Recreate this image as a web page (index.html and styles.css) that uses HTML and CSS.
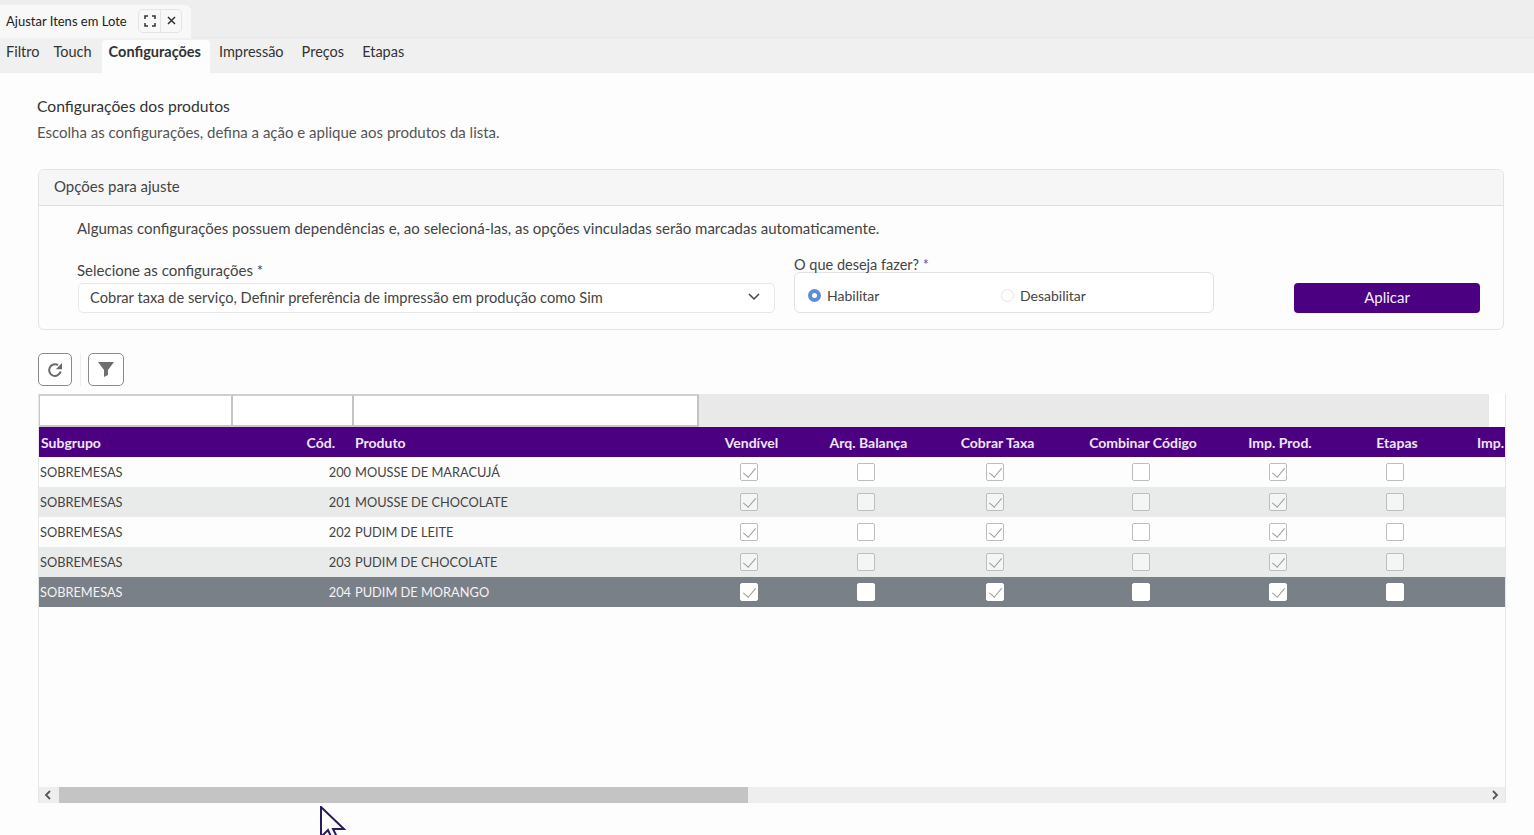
FILE: index.html

```html
<!DOCTYPE html>
<html lang="pt-BR">
<head>
  <meta charset="UTF-8" />
  <meta name="viewport" content="width=device-width, initial-scale=1.0" />
  <title>Ajustar Itens em Lote</title>
  <link rel="stylesheet" href="styles.css">
</head>
<body>

  <div class="window-bar">
    <div class="window-tab">
      <span class="window-title">Ajustar Itens em Lote</span>
      <div class="window-actions">
        <button class="window-btn" aria-label="Expandir">
          <svg width="12" height="12" viewBox="0 0 12 12" fill="none" stroke="#333" stroke-width="1.5"><path d="M1 4V1h3M8 1h3v3M11 8v3H8M4 11H1V8"/></svg>
        </button>
        <button class="window-btn" aria-label="Fechar">
          <svg width="9" height="9" viewBox="0 0 9 9" fill="none" stroke="#333" stroke-width="1.5"><path d="M1 1l7 7M8 1L1 8"/></svg>
        </button>
      </div>
    </div>
  </div>

  <nav class="tabs">
    <a class="tab tab-first">Filtro</a>
    <a class="tab">Touch</a>
    <a class="tab active">Configurações</a>
    <a class="tab">Impressão</a>
    <a class="tab">Preços</a>
    <a class="tab">Etapas</a>
  </nav>

  <main class="content">
    <h1 class="page-title">Configurações dos produtos</h1>
    <p class="page-desc">Escolha as configurações, defina a ação e aplique aos produtos da lista.</p>

    <section class="panel">
      <div class="panel-head">Opções para ajuste</div>
      <div class="panel-body">
        <p class="panel-note">Algumas configurações possuem dependências e, ao selecioná-las, as opções vinculadas serão marcadas automaticamente.</p>
        <div class="form-row">
          <div class="field field-select">
            <label>Selecione as configurações *</label>
            <div class="select">
              <span>Cobrar taxa de serviço, Definir preferência de impressão em produção como Sim</span>
              <svg width="12" height="8" viewBox="0 0 12 8" fill="none" stroke="#444" stroke-width="1.5"><path d="M1 1l5 5 5-5"/></svg>
            </div>
          </div>
          <div class="field field-radio">
            <label>O que deseja fazer? <span class="req">*</span></label>
            <div class="radio-box">
              <span class="radio-item"><i class="radio on"></i>Habilitar</span>
              <span class="radio-item"><i class="radio"></i>Desabilitar</span>
            </div>
          </div>
          <button class="btn-apply">Aplicar</button>
        </div>
      </div>
    </section>

    <div class="toolbar">
      <button class="tool-btn" aria-label="Atualizar">
        <svg width="16" height="16" viewBox="0 0 16 16" fill="none" stroke="#6a6a6a" stroke-width="2"><path d="M13.6 9.5A5.8 5.8 0 1 1 11 3.2"/><path d="M15 1v6.2H8.8z" fill="#6a6a6a" stroke="none"/></svg>
      </button>
      <span class="tool-sep"></span>
      <button class="tool-btn tool-btn-wide" aria-label="Filtrar">
        <svg width="16" height="15" viewBox="0 0 16 15" fill="#6f6f6f"><path d="M0 0h16L10 8v5l-4 2V8z"/></svg>
      </button>
    </div>

    <div class="grid">
      <div class="filter-row">
        <div class="filter-cell cell-sub"></div>
        <div class="filter-cell cell-cod"></div>
        <div class="filter-cell cell-prod"></div>
        <div class="filter-rest"></div>
      </div>
      <div class="grid-view">
        <table class="grid-table">
          <colgroup>
            <col class="col-sub"><col class="col-cod"><col class="col-prod">
            <col class="col-a"><col class="col-b"><col class="col-c"><col class="col-d"><col class="col-e"><col class="col-f"><col class="col-g">
          </colgroup>
          <thead>
            <tr>
              <th class="left">Subgrupo</th><th class="th-cod">Cód.</th><th class="left">Produto</th>
              <th>Vendível</th><th>Arq. Balança</th><th>Cobrar Taxa</th><th>Combinar Código</th><th>Imp. Prod.</th><th>Etapas</th><th class="th-imp">Imp.</th>
            </tr>
          </thead>
          <tbody>
            <tr>
              <td>SOBREMESAS</td><td class="num">200</td><td>MOUSSE DE MARACUJÁ</td>
              <td><i class="check on"></i></td><td><i class="check"></i></td><td><i class="check on"></i></td><td><i class="check"></i></td><td><i class="check on"></i></td><td><i class="check"></i></td><td></td>
            </tr>
            <tr>
              <td>SOBREMESAS</td><td class="num">201</td><td>MOUSSE DE CHOCOLATE</td>
              <td><i class="check on"></i></td><td><i class="check"></i></td><td><i class="check on"></i></td><td><i class="check"></i></td><td><i class="check on"></i></td><td><i class="check"></i></td><td></td>
            </tr>
            <tr>
              <td>SOBREMESAS</td><td class="num">202</td><td>PUDIM DE LEITE</td>
              <td><i class="check on"></i></td><td><i class="check"></i></td><td><i class="check on"></i></td><td><i class="check"></i></td><td><i class="check on"></i></td><td><i class="check"></i></td><td></td>
            </tr>
            <tr>
              <td>SOBREMESAS</td><td class="num">203</td><td>PUDIM DE CHOCOLATE</td>
              <td><i class="check on"></i></td><td><i class="check"></i></td><td><i class="check on"></i></td><td><i class="check"></i></td><td><i class="check on"></i></td><td><i class="check"></i></td><td></td>
            </tr>
            <tr class="selected">
              <td>SOBREMESAS</td><td class="num">204</td><td>PUDIM DE MORANGO</td>
              <td><i class="check on"></i></td><td><i class="check"></i></td><td><i class="check on"></i></td><td><i class="check"></i></td><td><i class="check on"></i></td><td><i class="check"></i></td><td></td>
            </tr>
          </tbody>
        </table>
      </div>
      <div class="scrollbar">
        <span class="scroll-arrow scroll-arrow-start">
          <svg width="7" height="10" viewBox="0 0 7 10" fill="none" stroke="#555" stroke-width="1.8"><path d="M6 1L2 5l4 4"/></svg>
        </span>
        <span class="scroll-thumb"></span>
        <span class="scroll-arrow scroll-arrow-end">
          <svg width="7" height="10" viewBox="0 0 7 10" fill="none" stroke="#555" stroke-width="1.8"><path d="M1 1l4 4-4 4"/></svg>
        </span>
      </div>
    </div>
  </main>

  <svg class="cursor" width="28" height="36" viewBox="0 0 28 36" fill="#fff" stroke="#2b1a5e" stroke-width="2"><path d="M1 1v30l7-7 5 11 5-2-5-10h11z"/></svg>

</body>
</html>
```

FILE: styles.css

```css
* { box-sizing: border-box; }
html, body { height: 100%; }
body { margin: 0; height: 835px; overflow: hidden; position: relative; background: #fdfdfd; color: #444; font-family: Lato, "Open Sans", Arial, sans-serif; font-size: 15px; }
button { font-family: inherit; padding: 0; cursor: pointer; }

.window-bar { height: 38px; padding-top: 5px; background: #eeeeee; border-bottom: 1px solid #e8e8e8; }
.window-tab { width: 191px; height: 33px; padding: 0 9px 2px 6px; display: flex; align-items: center; justify-content: space-between; background: #f8f8f8; border-radius: 0 6px 0 0; }
.window-title { color: #222; font-size: 13px; }
.window-actions { display: flex; border: 1px solid #e4e4e4; border-radius: 5px; }
.window-btn { width: 21px; height: 22px; display: flex; align-items: center; justify-content: center; background: none; border: 0; }
.window-btn + .window-btn { border-left: 1px solid #e4e4e4; }

.tabs { height: 35px; display: flex; align-items: flex-end; background: #f0f0f0; font-size: 14.5px; }
.tab { height: 33px; padding: 0 9px; line-height: 23px; color: #333; }
.tab-first { padding: 0 5px 0 6px; }
.tab.active { margin-left: 1px; padding: 0 9px 0 7px; background: #fdfdfd; border-radius: 4px 4px 0 0; font-weight: 700; color: #333; }

.content { padding: 23px 30px 0 38px; }
.page-title { margin: 0 0 0 -1px; font-size: 15.7px; font-weight: 400; line-height: 20px; color: #333; }
.page-desc { margin: 6px 0 0 -1px; line-height: 20px; color: #555; }

.panel { margin-top: 27px; border: 1px solid #e4e4e4; border-radius: 6px; background: #fdfdfd; }
.panel-head { height: 36px; padding-left: 15px; line-height: 33px; background: #f6f6f6; border-bottom: 1px solid #dedede; border-radius: 6px 6px 0 0; color: #444; }
.panel-body { height: 123px; padding: 12px 23px 16px 39px; }
.panel-note { margin: 0 0 0 -1px; line-height: 20px; color: #444; }
.form-row { margin-top: 20px; display: flex; align-items: flex-end; }
.field label { display: block; color: #444; }
.req { color: #7a3f9a; }
.field-select { width: 697px; }
.field-select label { margin: 0 0 4px -1px; line-height: 18px; }
.select { height: 30px; padding: 0 14px 2px 11px; display: flex; align-items: center; justify-content: space-between; background: #fff; border: 1px solid #e8e8e8; border-radius: 5px; color: #444; font-size: 14.65px; }
.field-radio { width: 420px; margin-left: 19px; }
.field-radio label { font-size: 14.5px; line-height: 14px; }
.radio-box { height: 41px; padding-left: 13px; display: flex; align-items: center; background: #fff; border: 1px solid #e2e2e2; border-radius: 6px; font-size: 14px; }
.radio-item { width: 193px; display: flex; align-items: center; gap: 6px; color: #444; padding-top: 6px; }
.radio { width: 13px; height: 13px; border-radius: 50%; border: 1px solid #e4e4e4; background: #fff; }
.radio.on { border: 4px solid #5b8dd9; }
.btn-apply { width: 186px; height: 30px; margin-left: 80px; padding-bottom: 2px; background: #4b0082; border: 0; border-radius: 4px; color: #f4f0f8; font-size: 15px; }

.toolbar { margin-top: 23px; display: flex; align-items: center; height: 33px; }
.tool-btn { width: 34px; height: 33px; display: flex; align-items: center; justify-content: center; background: #fff; border: 1px solid #8a8a8a; border-radius: 5px; }
.tool-btn-wide { width: 36px; }
.tool-sep { width: 1px; height: 33px; margin: 0 7px 0 8px; background: #eeeeee; }

.grid { margin-top: 8px; width: 1468px; border-right: 1px solid #e6e6e6; border-left: 1px solid #e6e6e6; }
.filter-row { height: 33px; display: flex; background: #fff; }
.filter-cell { height: 33px; background: #fff; border-top: 2px solid #cfcfcf; border-bottom: 2px solid #c8c8c8; border-right: 2px solid #c4c4c4; }
.filter-rest { width: 790px; background: #e9e9e9; }
.cell-sub { width: 194px; border-left: 1px solid #c8c8c8; }
.cell-cod { width: 121px; }
.cell-prod { width: 345px; }

.grid-view { height: 360px; overflow: hidden; }
.grid-table { width: 1540px; table-layout: fixed; border-collapse: collapse; }
col.col-sub { width: 193px; }
col.col-cod { width: 121px; }
col.col-prod { width: 345px; }
col.col-a { width: 107px; }
col.col-b { width: 127px; }
col.col-c { width: 131px; }
col.col-d { width: 160px; }
col.col-e { width: 114px; }
col.col-f { width: 120px; }
col.col-g { width: 122px; }
.grid-table th { height: 30px; padding: 0; background: #4b0082; color: #ece6f2; font-size: 14px; font-weight: 700; text-align: center; }
.grid-table th.left { padding-left: 2px; text-align: left; }
.grid-table th.th-cod { padding-right: 18px; text-align: right; }
.grid-table th.th-imp { padding-left: 20px; text-align: left; }
.grid-table td { height: 30px; padding: 0 6px 0 1px; text-align: center; color: #444; font-size: 12.8px; }
.grid-table td:nth-child(1), .grid-table td:nth-child(3) { text-align: left; }
.grid-table td:nth-child(3) { padding-left: 2px; }
.grid-table td.num { padding-right: 2px; text-align: right; }
.grid-table tbody tr:nth-child(even) td { background: #e9ebeb; }
.grid-table tr.selected td { background: #7a8088; color: #f4f4f4; }

.check { display: inline-block; width: 18px; height: 18px; vertical-align: middle; position: relative; background: #fff; border: 1px solid #bdbdbd; border-radius: 2px; }
.grid-table tbody tr:nth-child(even) .check { background: #f4f5f5; }
.grid-table tr.selected .check, .grid-table tbody tr.selected:nth-child(odd) .check { background: #fff; border-color: #fff; }
.check.on::after { content: ""; position: absolute; left: 5px; top: 1px; width: 6px; height: 11px; border: solid #9a9a9a; border-width: 0 1px 1px 0; transform: rotate(40deg); }

.scrollbar { height: 16px; display: flex; background: #eeeeee; }
.scroll-arrow { width: 20px; display: flex; align-items: center; justify-content: center; }
.scroll-arrow-start { padding-right: 4px; }
.scroll-thumb { width: 689px; background: #c4c4c4; }
.scroll-arrow-end { margin-left: auto; }

.cursor { position: absolute; left: 320px; top: 806px; }
```
